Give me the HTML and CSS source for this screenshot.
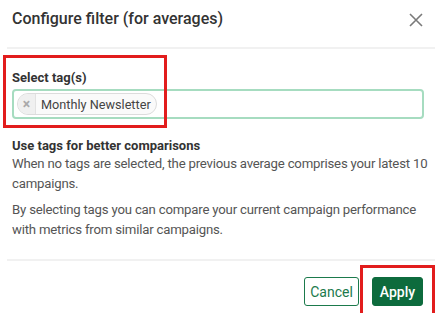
FILE: index.html
```html
<!DOCTYPE html>
<html lang="en">
<head>
    <meta charset="UTF-8">
    <meta name="viewport" content="width=device-width, initial-scale=1.0">
    <title>Configure filter</title>
    <link rel="stylesheet" href="styles.css">
</head>
<body>
    <div class="modal">
        <div class="modal_header">
            <h2 class="modal_title">Configure filter (for averages)</h2>
            <span class="modal_close">
                <svg width="14" height="14" viewBox="0 0 14 14">
                    <path d="M1 1 L13 13 M13 1 L1 13" stroke="#7a7a7a" stroke-width="1.6" fill="none"/>
                </svg>
            </span>
        </div>

        <div class="modal_body">
            <label class="field_label">Select tag(s)</label>
            <div class="tag_input">
                <span class="tag_chip">
                    <span class="tag_remove">&times;</span>
                    <span class="tag_text">Monthly Newsletter</span>
                </span>
            </div>

            <div class="hint">
                <h3 class="hint_title">Use tags for better comparisons</h3>
                <p>When no tags are selected, the previous average comprises your latest 10 campaigns.</p>
                <p>By selecting tags you can compare your current campaign performance with metrics from similar campaigns.</p>
            </div>
        </div>

        <div class="modal_footer">
            <button class="btn btn_outline">Cancel</button>
            <button class="btn btn_primary">Apply</button>
        </div>
    </div>

    <!-- annotation boxes -->
    <div class="mark mark_tags"></div>
    <div class="mark mark_apply"></div>
</body>
</html>
```

FILE: styles.css
```css
body {
    margin: 0;
    font-family: Roboto, "Liberation Sans", sans-serif;
    background: #fff;
    color: #333;
    position: relative;
    width: 443px;
    height: 313px;
    overflow: hidden;
}

.modal {
    margin: 0 8px 0 7px;
}

/* Header */
.modal_header {
    display: flex;
    justify-content: space-between;
    align-items: center;
    height: 47px;
    padding: 0 12px 0 5px;
    border-bottom: 2px solid #f1f1f1;
}

.modal_title {
    margin: 0;
    font-size: 16px;
    font-weight: 500;
    color: #333;
    padding-bottom: 10px;
}

.modal_close {
    display: flex;
    padding-bottom: 8px;
}

/* Body */
.modal_body {
    padding: 21px 0 0 5px;
}

.field_label {
    display: block;
    font-size: 13px;
    font-weight: 700;
    color: #333;
    margin-bottom: 4px;
}

.tag_input {
    height: 26px;
    margin-right: 11px;
    border: 2px solid #a6dcc0;
    border-radius: 4px;
    display: flex;
    align-items: center;
    padding: 0 3px;
}

.tag_chip {
    display: flex;
    align-items: stretch;
    height: 20px;
    border: 1px solid #dcdcdc;
    border-radius: 11px;
    background: #fafafa;
    overflow: hidden;
}

.tag_remove {
    width: 17px;
    display: flex;
    align-items: center;
    justify-content: center;
    background: #f0f0f0;
    color: #aaa;
    font-size: 14px;
    font-weight: 700;
    border-right: 1px solid #e2e2e2;
}

.tag_text {
    display: flex;
    align-items: center;
    padding: 0 5px 0 5px;
    font-size: 12.7px;
    color: #444;
}

.hint {
    margin-top: 19px;
}

.hint_title {
    margin: 0 0 1px;
    font-size: 13px;
    font-weight: 700;
    color: #333;
}

.hint p {
    margin: 0 0 6px;
    font-size: 13.2px;
    letter-spacing: -0.2px;
    line-height: 20px;
    color: #555;
}

/* Footer */
.modal_footer {
    display: flex;
    justify-content: flex-end;
    gap: 13px;
    margin-top: 19px;
    padding: 16px 12px 0;
    border-top: 2px solid #f1f1f1;
}

.btn {
    height: 29px;
    font-family: inherit;
    font-size: 14px;
    border-radius: 3px;
    padding: 0;
    cursor: pointer;
}

.btn_outline {
    width: 55px;
    background: #fff;
    color: #1b7a4c;
    border: 1px solid #1b7a4c;
}

.btn_primary {
    width: 51px;
    background: #0d6b3d;
    color: #fff;
    border: 1px solid #0d6b3d;
    font-weight: 500;
}

/* Red highlight boxes over the dialog */
.mark {
    position: absolute;
    border: 3px solid #e21d1d;
    pointer-events: none;
}

.mark_tags {
    left: 3px;
    top: 55px;
    width: 158px;
    height: 67px;
}

.mark_apply {
    left: 360px;
    top: 265px;
    width: 69px;
    height: 45px;
    border-bottom: 0;
}
```
